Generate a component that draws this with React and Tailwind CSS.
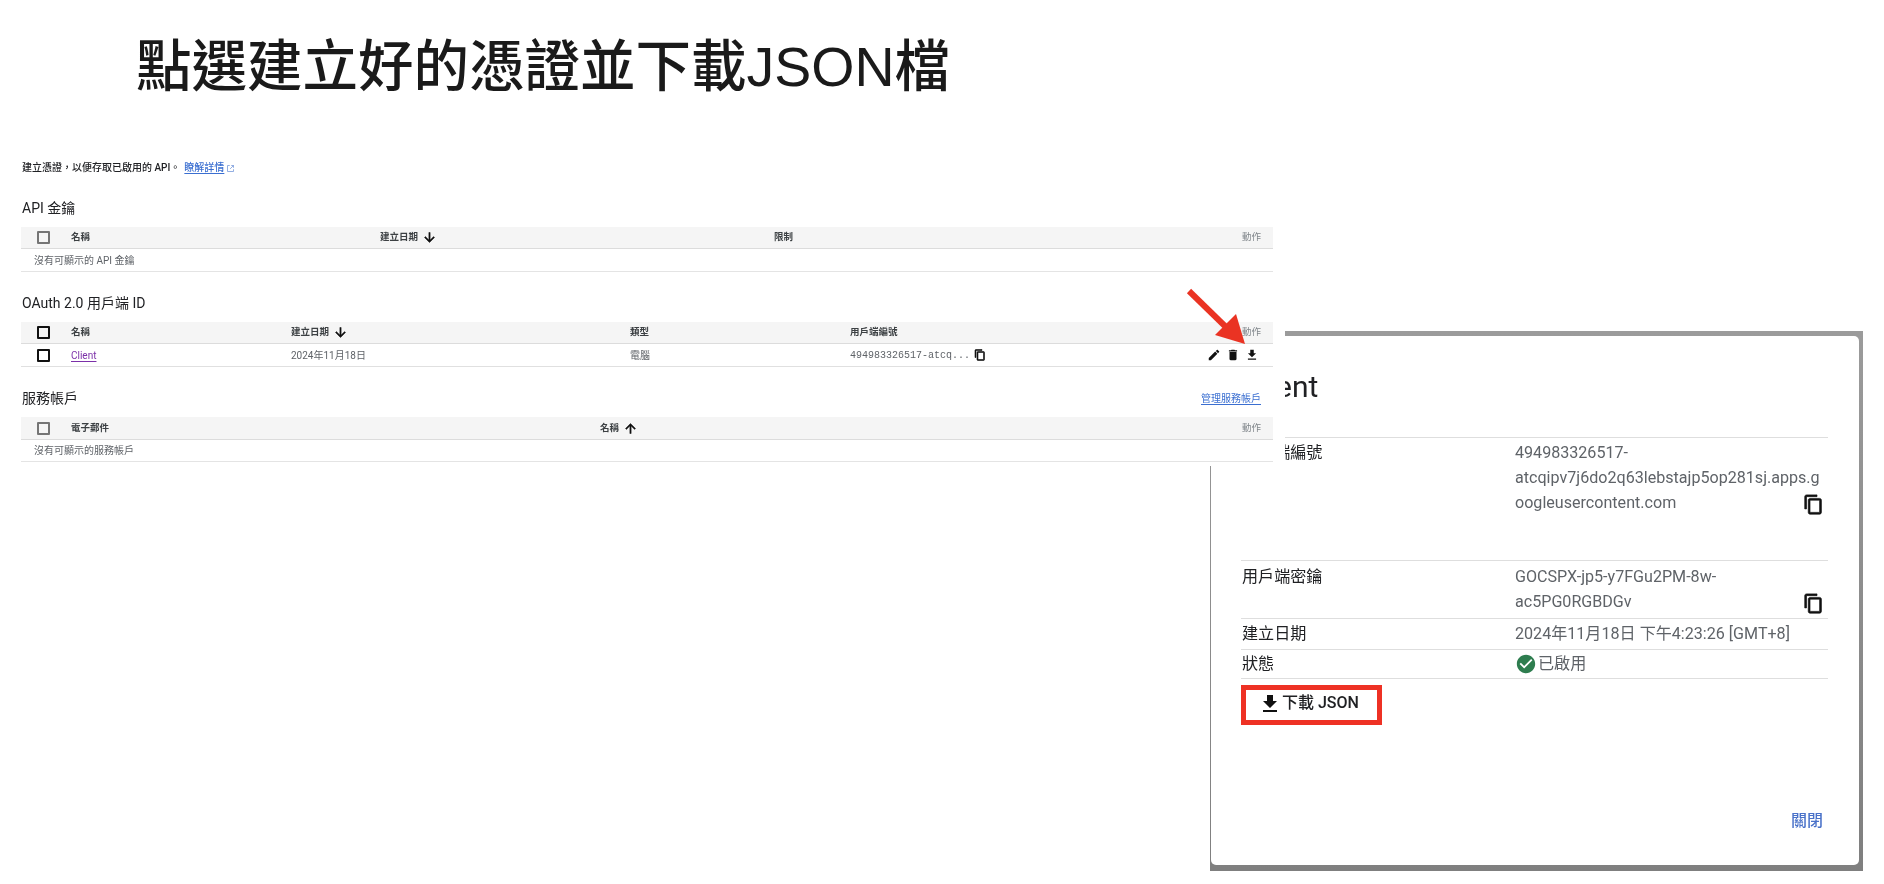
const FONT = "font-['Roboto','Noto_Sans_CJK_TC',sans-serif]";

function Icon({ d, className }) {
  return (
    <svg viewBox="0 0 24 24" fill="currentColor" className={className}>
      <path d={d} />
    </svg>
  );
}

const P = {
  copy: "M16 1H4c-1.1 0-2 .9-2 2v14h2V3h12V1zm3 4H8c-1.1 0-2 .9-2 2v14c0 1.1.9 2 2 2h11c1.1 0 2-.9 2-2V7c0-1.1-.9-2-2-2zm0 16H8V7h11v14z",
  edit: "M3 17.25V21h3.75L17.81 9.94l-3.75-3.75L3 17.25zM20.71 7.04c.39-.39.39-1.02 0-1.41l-2.34-2.34c-.39-.39-1.02-.39-1.41 0l-1.83 1.83 3.75 3.75 1.83-1.83z",
  del: "M6 19c0 1.1.9 2 2 2h8c1.1 0 2-.9 2-2V7H6v12zM19 4h-3.5l-1-1h-5l-1 1H5v2h14V4z",
  dl: "M19 9h-4V3H9v6H5l7 7 7-7zM5 18v2h14v-2H5z",
  check: "M12 2C6.48 2 2 6.48 2 12s4.48 10 10 10 10-4.48 10-10S17.52 2 12 2zm-2 15l-5-5 1.41-1.41L10 14.17l7.59-7.59L19 8l-9 9z",
  down: "M20 12l-1.41-1.41L13 16.17V4h-2v12.17l-5.58-5.59L4 12l8 8 8-8z",
  up: "M4 12l1.41 1.41L11 7.83V20h2V7.83l5.58 5.59L20 12l-8-8-8 8z",
};

function Box({ dark }) {
  return (
    <span
      className={
        "block w-[13px] h-[13px] ml-[16px] rounded-[1px] border-2 " +
        (dark ? "border-[#111]" : "border-[#757575]")
      }
    />
  );
}

function Th({ children }) {
  return <span className="text-[9.5px] font-semibold text-[#3c4043] whitespace-nowrap">{children}</span>;
}

function Sorted({ label, d }) {
  return (
    <span className="flex items-center gap-[4px]">
      <Th>{label}</Th>
      <Icon d={d} className="w-[15px] h-[15px] text-[#111] stroke-current stroke-[0.8]" />
    </span>
  );
}

function Head({ cols, dark, children, h = "h-[22px]" }) {
  return (
    <div className={"grid items-center bg-[#f5f5f5] border-b border-[#dcdcdc] pr-[12px] " + h + " " + cols}>
      <Box dark={dark} />
      {children}
      <span className="text-[9.5px] text-[#80868b] text-right">動作</span>
    </div>
  );
}

function Empty({ children, h = "h-[23px]" }) {
  return (
    <div className={"flex items-center pl-[13px] border-b border-[#e4e4e4] text-[10px] text-[#5f6368] " + h}>
      {children}
    </div>
  );
}

function H2({ children, className = "" }) {
  return <h2 className={"h-[20px] leading-[20px] text-[14px] text-[#202124] pl-px " + className}>{children}</h2>;
}

function DRow({ label, children, className }) {
  return (
    <div className={"relative flex border-t border-[#dedede] text-[16.1px] " + className}>
      <span className="w-[274px] shrink-0 text-[#202124] pl-px">{label}</span>
      <div className="text-[#5f6368] whitespace-nowrap">{children}</div>
    </div>
  );
}

export default function App() {
  const t2 = "grid-cols-[50px_220px_339px_220px_1fr_auto]";
  return (
    <div className={"relative w-[1884px] h-[884px] overflow-hidden bg-white " + FONT}>
      <div className="h-[130px] pt-[39px] pl-[136px]">
        <h1 className="text-[55.5px] leading-[56px] font-medium text-[#1a1a1a] whitespace-nowrap font-['Liberation_Sans','Noto_Sans_CJK_TC',sans-serif]">
          點選建立好的憑證並下載JSON檔
        </h1>
      </div>

      <section className="relative z-10 w-[1285px] bg-white pt-[30px] pb-[4px] pl-[21px] blur-[0.35px]">
        <p className="h-[16px] leading-[16px] flex items-center text-[10px] font-medium text-[#202124] pl-px">
          <span className="whitespace-pre">{"建立憑證\uFF0C以便存取已啟用的 API\u3002"}</span>
          <a className="ml-[4px] text-[#3b6fd1] underline underline-offset-2">瞭解詳情</a>
          <svg viewBox="0 0 24 24" fill="none" stroke="#6f93d8" strokeWidth="2" className="w-[9px] h-[9px] ml-[2px]">
            <path d="M10 4H4v16h16v-6M14 4h6v6M20 4l-9 9" />
          </svg>
        </p>

        <H2 className="mt-[22px]">API 金鑰</H2>
        <div className="w-[1252px] mt-[9px]">
          <Head cols="grid-cols-[50px_309px_394px_1fr_auto]">
            <Th>名稱</Th>
            <Sorted label="建立日期" d={P.down} />
            <Th>限制</Th>
          </Head>
          <Empty>沒有可顯示的 API 金鑰</Empty>
        </div>

        <H2 className="mt-[21px]">OAuth 2.0 用戶端 ID</H2>
        <div className="w-[1252px] mt-[9px]">
          <Head cols={t2} dark>
            <Th>名稱</Th>
            <Sorted label="建立日期" d={P.down} />
            <Th>類型</Th>
            <Th>用戶端編號</Th>
          </Head>
          <div className={"grid items-center h-[23px] border-b border-[#e0e0e0] pr-[13px] text-[10px] text-[#5f6368] " + t2}>
            <Box dark />
            <a className="text-[#7b2fa8] underline underline-offset-2 justify-self-start">Client</a>
            <span>2024年11月18日</span>
            <span>電腦</span>
            <span className="flex items-center gap-[4px]">
              <span className="font-['Liberation_Mono',monospace]">494983326517-atcq...</span>
              <Icon d={P.copy} className="w-[12px] h-[12px] text-[#111] stroke-current stroke-[1.2]" />
            </span>
            <span className="flex justify-end items-center gap-[5px] text-[#111] -translate-x-px">
              <Icon d={P.edit} className="w-[14px] h-[14px]" />
              <Icon d={P.del} className="w-[14px] h-[14px]" />
              <Icon d={P.dl} className="w-[14px] h-[14px]" />
            </span>
          </div>
        </div>

        <div className="w-[1252px] flex justify-between items-center mt-[21px] pr-[12px]">
          <H2>服務帳戶</H2>
          <a className="text-[10px] text-[#3b6fd1] underline underline-offset-2">管理服務帳戶</a>
        </div>
        <div className="w-[1252px] mt-[9px]">
          <Head h="h-[23px]" cols="grid-cols-[50px_529px_1fr_auto]">
            <Th>電子郵件</Th>
            <Sorted label="名稱" d={P.up} />
          </Head>
          <Empty h="h-[22px]">沒有可顯示的服務帳戶</Empty>
        </div>
      </section>

      <div className="absolute left-[1210px] top-[331px] w-[653px] h-[540px] flex flex-col pl-px pt-[5px] pr-[4px] pb-[6px] bg-gradient-to-b from-[#9b9b9b] to-[#7f7f7f] blur-[0.3px]">
        <div className="flex-1 flex flex-col bg-white rounded-[5px] pt-[31px] pl-[30px] pr-[31px] pb-[36px]">
          <h3 className="h-[40px] leading-[40px] text-[30px] text-[#202124] mb-[30px] pl-px">Client</h3>
          <DRow label="用戶端編號" className="h-[83px] pt-[2px] leading-[25px]">
            <div>494983326517-</div>
            <div>atcqipv7j6do2q63lebstajp5op281sj.apps.g</div>
            <div>oogleusercontent.com</div>
            <Icon d={P.copy} className="absolute right-[4px] bottom-[5px] w-[21px] h-[21px] text-[#111] stroke-current stroke-[0.8]" />
          </DRow>
          <DRow label="用戶端密鑰" className="mt-[40px] h-[58px] pt-[3px] leading-[25px]">
            <div>GOCSPX-jp5-y7FGu2PM-8w-</div>
            <div>ac5PG0RGBDGv</div>
            <Icon d={P.copy} className="absolute right-[4px] bottom-[4px] w-[21px] h-[21px] text-[#111] stroke-current stroke-[0.8]" />
          </DRow>
          <DRow label="建立日期" className="h-[31px] items-center">
            2024年11月18日 下午4:23:26 [GMT+8]
          </DRow>
          <DRow label="狀態" className="h-[30px] items-center border-b">
            <span className="flex items-center gap-[1px]">
              <Icon d={P.check} className="w-[22px] h-[22px] text-[#2e7d4f]" />
              已啟用
            </span>
          </DRow>
          <div className="mt-[6px] w-[141px] h-[40px] border-[5px] border-[#ee3124] flex items-start pt-[2px] pl-[12px] gap-0">
            <Icon d={P.dl} className="w-[24px] h-[24px] text-[#111] shrink-0" />
            <span className="text-[16px] leading-[22px] font-medium text-[#202124] whitespace-nowrap">下載 JSON</span>
          </div>
          <div className="mt-auto flex justify-end pr-[5px]">
            <span className="text-[16px] leading-[16px] font-medium text-[#4a72c9]">關閉</span>
          </div>
        </div>
      </div>

      <svg viewBox="0 0 60 56" className="absolute z-20 left-[1185px] top-[288px] w-[60px] h-[56px]">
        <path d="M4 3 L44 42" stroke="#ea3323" strokeWidth="6" fill="none" />
        <path d="M60 56 L30 47 L51 26 Z" fill="#ea3323" />
      </svg>
    </div>
  );
}
